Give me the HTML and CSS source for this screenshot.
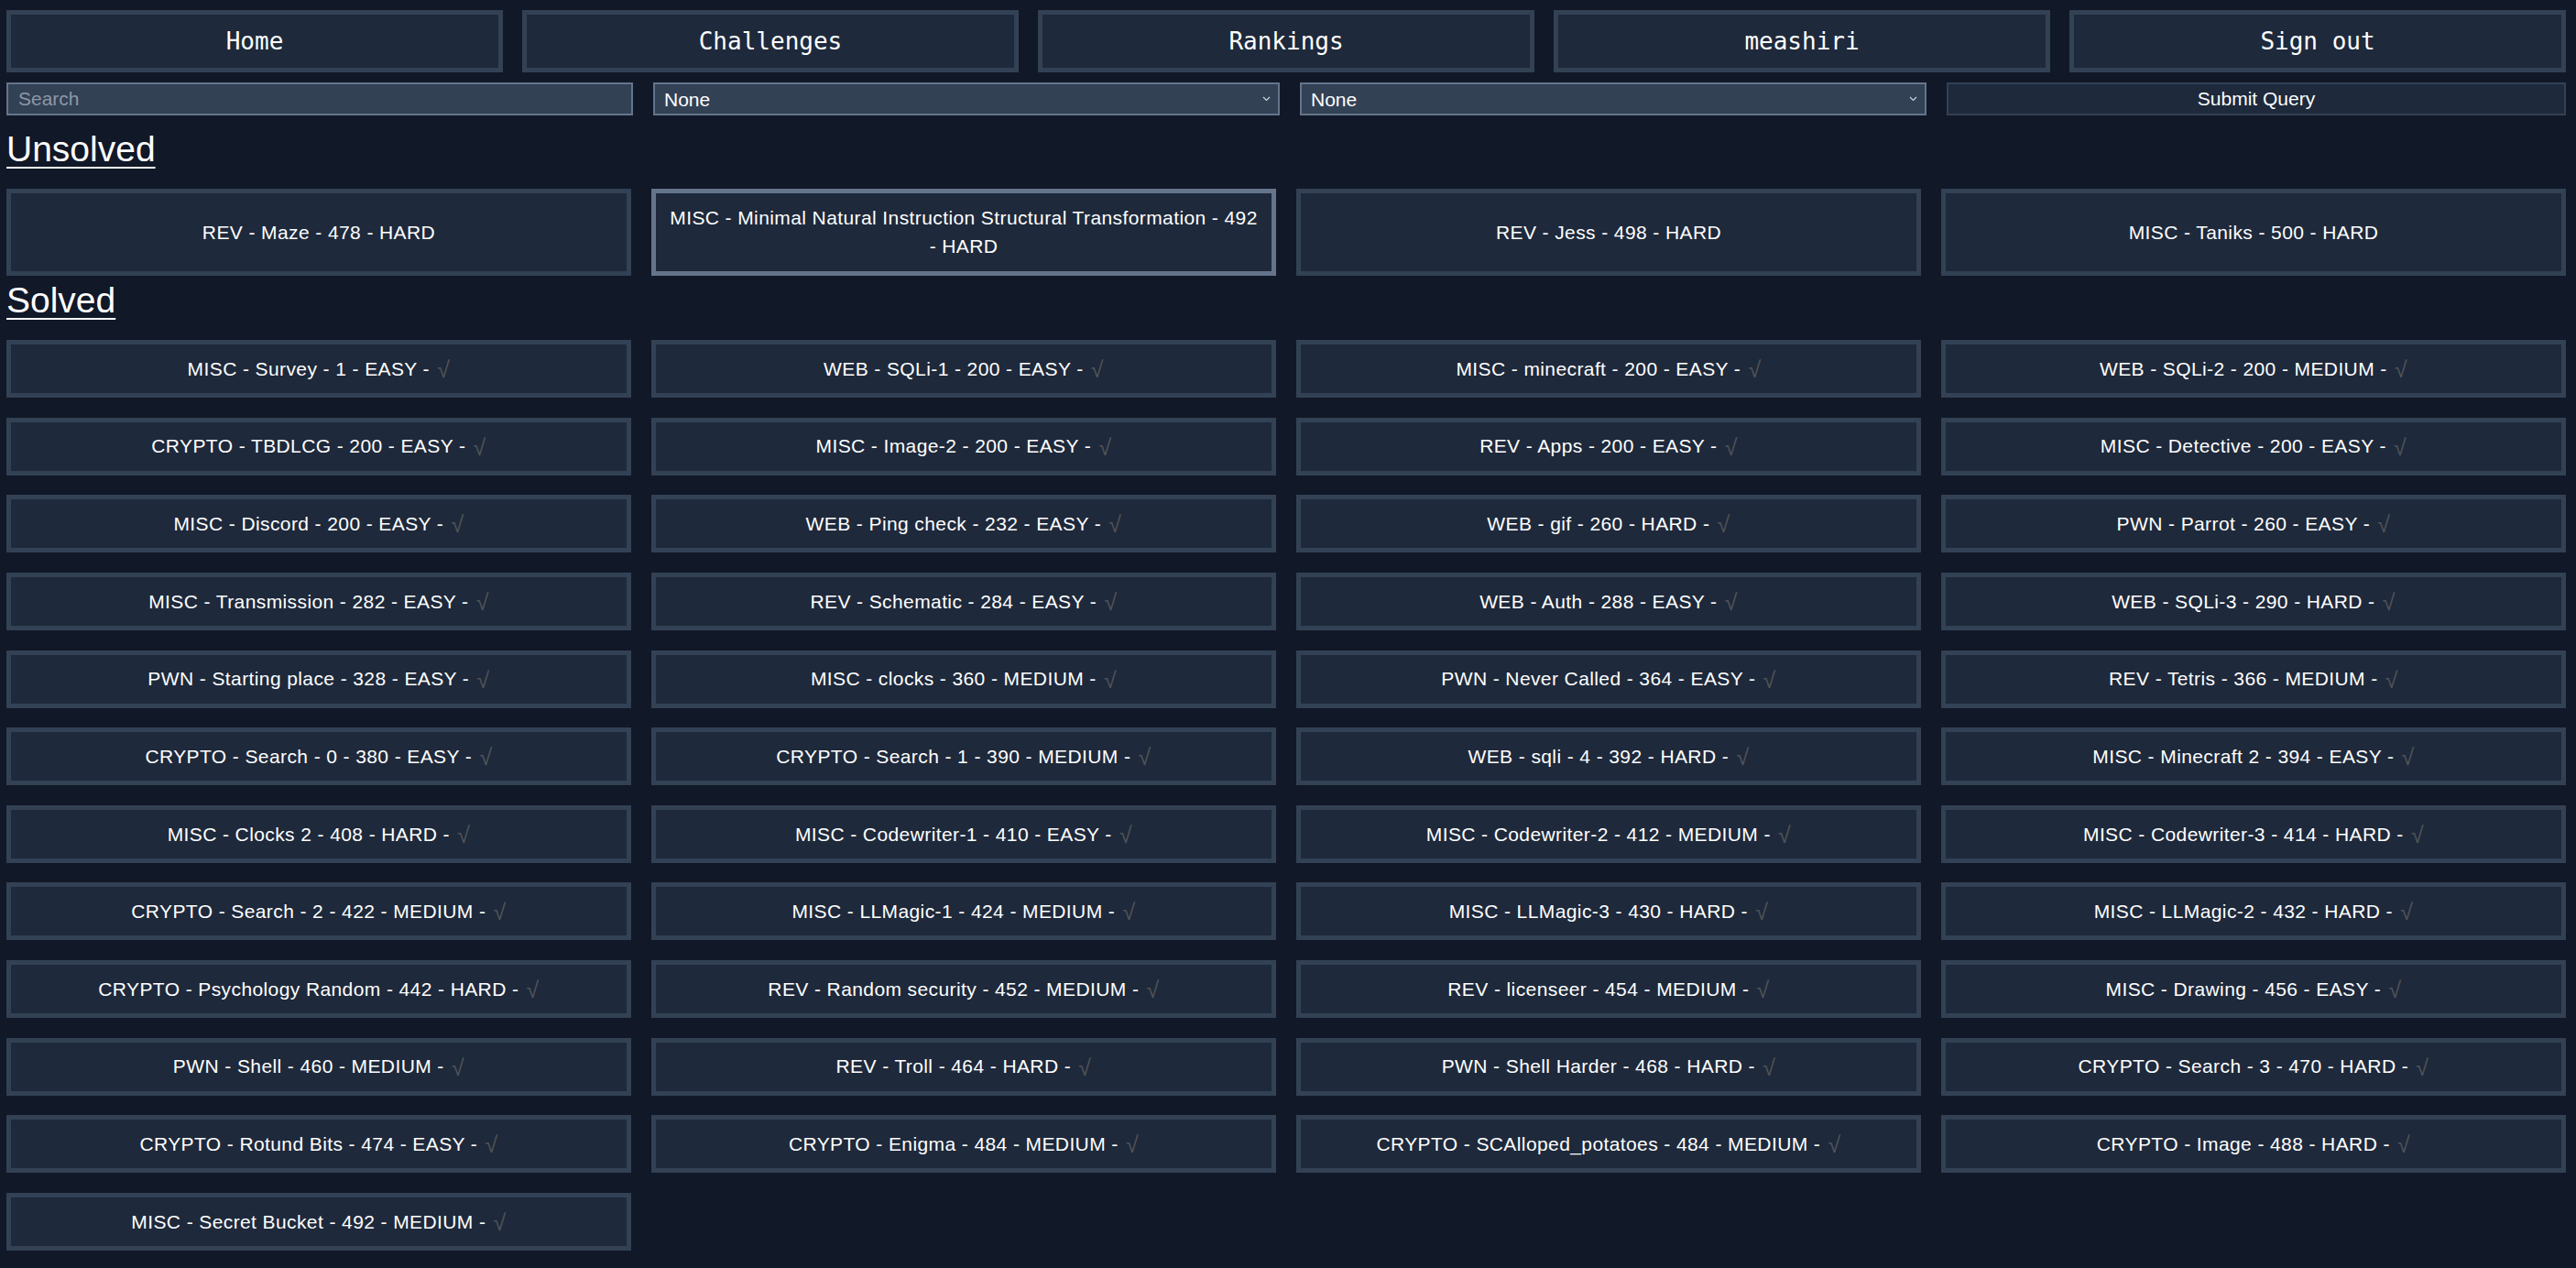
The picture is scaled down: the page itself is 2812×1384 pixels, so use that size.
FILE: index.html
```html
<!DOCTYPE html>
<html lang="en">
<head>
<meta charset="utf-8">
<title>Challenges</title>
<link rel="stylesheet" href="styles.css">
</head>
<body>
<nav class="nav">
  <a class="nav-btn" href="#">Home</a>
  <a class="nav-btn" href="#">Challenges</a>
  <a class="nav-btn" href="#">Rankings</a>
  <a class="nav-btn" href="#">meashiri</a>
  <a class="nav-btn" href="#">Sign out</a>
</nav>

<form class="filters">
  <input class="field" type="text" placeholder="Search">
  <div class="select-wrap">
    <select class="field select"><option>None</option></select>
    <svg class="chev" width="9" height="6" viewBox="0 0 9 6"><path d="M1 1 L4.5 4.5 L8 1" fill="none" stroke="#cbd5e1" stroke-width="1.2"/></svg>
  </div>
  <div class="select-wrap">
    <select class="field select"><option>None</option></select>
    <svg class="chev" width="9" height="6" viewBox="0 0 9 6"><path d="M1 1 L4.5 4.5 L8 1" fill="none" stroke="#cbd5e1" stroke-width="1.2"/></svg>
  </div>
  <input class="submit" type="submit" value="Submit Query">
</form>

<h2 class="section-title">Unsolved</h2>
<div class="grid unsolved">
  <a class="card" href="#">REV - Maze - 478 - HARD</a>
  <a class="card active" href="#">MISC - Minimal Natural Instruction Structural Transformation - 492 - HARD</a>
  <a class="card" href="#">REV - Jess - 498 - HARD</a>
  <a class="card" href="#">MISC - Taniks - 500 - HARD</a>
</div>

<h2 class="section-title solved-title">Solved</h2>
<div class="grid solved">
  <a class="card" href="#">MISC - Survey - 1 - EASY - <span class="check">√</span></a>
  <a class="card" href="#">WEB - SQLi-1 - 200 - EASY - <span class="check">√</span></a>
  <a class="card" href="#">MISC - minecraft - 200 - EASY - <span class="check">√</span></a>
  <a class="card" href="#">WEB - SQLi-2 - 200 - MEDIUM - <span class="check">√</span></a>

  <a class="card" href="#">CRYPTO - TBDLCG - 200 - EASY - <span class="check">√</span></a>
  <a class="card" href="#">MISC - Image-2 - 200 - EASY - <span class="check">√</span></a>
  <a class="card" href="#">REV - Apps - 200 - EASY - <span class="check">√</span></a>
  <a class="card" href="#">MISC - Detective - 200 - EASY - <span class="check">√</span></a>

  <a class="card" href="#">MISC - Discord - 200 - EASY - <span class="check">√</span></a>
  <a class="card" href="#">WEB - Ping check - 232 - EASY - <span class="check">√</span></a>
  <a class="card" href="#">WEB - gif - 260 - HARD - <span class="check">√</span></a>
  <a class="card" href="#">PWN - Parrot - 260 - EASY - <span class="check">√</span></a>

  <a class="card" href="#">MISC - Transmission - 282 - EASY - <span class="check">√</span></a>
  <a class="card" href="#">REV - Schematic - 284 - EASY - <span class="check">√</span></a>
  <a class="card" href="#">WEB - Auth - 288 - EASY - <span class="check">√</span></a>
  <a class="card" href="#">WEB - SQLi-3 - 290 - HARD - <span class="check">√</span></a>

  <a class="card" href="#">PWN - Starting place - 328 - EASY - <span class="check">√</span></a>
  <a class="card" href="#">MISC - clocks - 360 - MEDIUM - <span class="check">√</span></a>
  <a class="card" href="#">PWN - Never Called - 364 - EASY - <span class="check">√</span></a>
  <a class="card" href="#">REV - Tetris - 366 - MEDIUM - <span class="check">√</span></a>

  <a class="card" href="#">CRYPTO - Search - 0 - 380 - EASY - <span class="check">√</span></a>
  <a class="card" href="#">CRYPTO - Search - 1 - 390 - MEDIUM - <span class="check">√</span></a>
  <a class="card" href="#">WEB - sqli - 4 - 392 - HARD - <span class="check">√</span></a>
  <a class="card" href="#">MISC - Minecraft 2 - 394 - EASY - <span class="check">√</span></a>

  <a class="card" href="#">MISC - Clocks 2 - 408 - HARD - <span class="check">√</span></a>
  <a class="card" href="#">MISC - Codewriter-1 - 410 - EASY - <span class="check">√</span></a>
  <a class="card" href="#">MISC - Codewriter-2 - 412 - MEDIUM - <span class="check">√</span></a>
  <a class="card" href="#">MISC - Codewriter-3 - 414 - HARD - <span class="check">√</span></a>

  <a class="card" href="#">CRYPTO - Search - 2 - 422 - MEDIUM - <span class="check">√</span></a>
  <a class="card" href="#">MISC - LLMagic-1 - 424 - MEDIUM - <span class="check">√</span></a>
  <a class="card" href="#">MISC - LLMagic-3 - 430 - HARD - <span class="check">√</span></a>
  <a class="card" href="#">MISC - LLMagic-2 - 432 - HARD - <span class="check">√</span></a>

  <a class="card" href="#">CRYPTO - Psychology Random - 442 - HARD - <span class="check">√</span></a>
  <a class="card" href="#">REV - Random security - 452 - MEDIUM - <span class="check">√</span></a>
  <a class="card" href="#">REV - licenseer - 454 - MEDIUM - <span class="check">√</span></a>
  <a class="card" href="#">MISC - Drawing - 456 - EASY - <span class="check">√</span></a>

  <a class="card" href="#">PWN - Shell - 460 - MEDIUM - <span class="check">√</span></a>
  <a class="card" href="#">REV - Troll - 464 - HARD - <span class="check">√</span></a>
  <a class="card" href="#">PWN - Shell Harder - 468 - HARD - <span class="check">√</span></a>
  <a class="card" href="#">CRYPTO - Search - 3 - 470 - HARD - <span class="check">√</span></a>

  <a class="card" href="#">CRYPTO - Rotund Bits - 474 - EASY - <span class="check">√</span></a>
  <a class="card" href="#">CRYPTO - Enigma - 484 - MEDIUM - <span class="check">√</span></a>
  <a class="card" href="#">CRYPTO - SCAlloped_potatoes - 484 - MEDIUM - <span class="check">√</span></a>
  <a class="card" href="#">CRYPTO - Image - 488 - HARD - <span class="check">√</span></a>

  <a class="card" href="#">MISC - Secret Bucket - 492 - MEDIUM - <span class="check">√</span></a>
</div>
</body>
</html>
```

FILE: styles.css
```css
* {
  box-sizing: border-box;
}

html {
  background: #111827;
}

body {
  margin: 0;
  padding: 11px 11px 0 7px;
  background: #111827;
  color: #ffffff;
  font-family: "Liberation Sans", Arial, Helvetica, sans-serif;
  font-size: 21px;
}

a {
  color: inherit;
  text-decoration: none;
}

.nav {
  display: grid;
  grid-template-columns: repeat(5, minmax(0, 1fr));
  column-gap: 21px;
}

.nav-btn {
  height: 68px;
  display: flex;
  align-items: center;
  justify-content: center;
  background: #1e293b;
  border: 5px solid #334155;
  font-family: "DejaVu Sans Mono", "Liberation Mono", monospace;
  font-size: 26px;
  color: #ffffff;
}

.filters {
  margin: 11px 0 0;
  display: grid;
  grid-template-columns: 684px 684px 684px minmax(0, 1fr);
  column-gap: 22px;
  height: 36px;
}

.field {
  width: 100%;
  height: 36px;
  margin: 0;
  padding: 0 11px;
  background: #334155;
  border: 2px solid #64748b;
  border-radius: 0;
  color: #ffffff;
  font-family: "Liberation Sans", Arial, sans-serif;
  font-size: 21px;
  outline: none;
}

.field::placeholder {
  color: #8d97a8;
}

.select-wrap {
  position: relative;
}

.select {
  appearance: none;
  -webkit-appearance: none;
  padding: 0 10px;
}

.chev {
  position: absolute;
  right: 10px;
  top: 15px;
  pointer-events: none;
}

.submit {
  width: 100%;
  height: 36px;
  margin: 0;
  padding: 0;
  background: #1e293b;
  border: 2px solid #334155;
  border-radius: 0;
  color: #ffffff;
  font-family: "Liberation Sans", Arial, sans-serif;
  font-size: 21px;
}

.section-title {
  margin: 17px 0 0;
  font-size: 39px;
  line-height: 39px;
  font-weight: normal;
  text-decoration: underline;
  text-decoration-thickness: 2px;
  text-underline-offset: 6px;
}

.solved-title {
  margin-top: 7.5px;
}

.grid {
  margin-top: 24px;
  display: grid;
  grid-template-columns: repeat(4, minmax(0, 1fr));
  column-gap: 22px;
}

.solved {
  row-gap: 21.64px;
}

.card {
  display: flex;
  align-items: center;
  justify-content: center;
  text-align: center;
  padding: 10.75px 9px;
  background: #1e293b;
  border: 5px solid #334155;
  font-size: 21px;
  line-height: 31.5px;
  letter-spacing: 0.4px;
  color: #ffffff;
  white-space: pre-wrap;
}

.card.active {
  border-color: #64748b;
}

.check {
  display: inline-block;
  margin-left: 2px;
  color: #505357;
  font-family: "Liberation Sans", Arial, sans-serif;
  font-size: 25px;
  line-height: 1;
  transform: translateY(1px);
}
```
